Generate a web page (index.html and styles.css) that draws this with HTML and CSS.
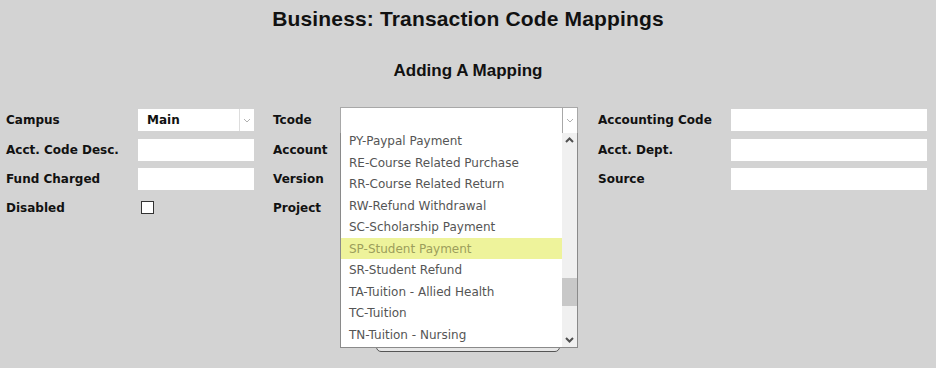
FILE: index.html
```html
<!DOCTYPE html>
<html>
<head>
<meta charset="utf-8">
<link rel="stylesheet" href="styles.css">
</head>
<body>
<div class="page">
  <h1 class="title">Business: Transaction Code Mappings</h1>
  <h2 class="subtitle">Adding A Mapping</h2>
  <div class="form">
    <div class="label">Campus</div>
    <div class="cell"><div class="select campus"><span class="val">Main</span><span class="arrow"><svg width="8" height="5" viewBox="0 0 8 5"><path d="M1 1 L4 4 L7 1" fill="none" stroke="#b0b0b0" stroke-width="1"/></svg></span></div></div>
    <div class="label">Tcode</div>
    <div class="cell">
      <div class="select tcode"><span class="val"></span><span class="arrow"><svg width="8" height="5" viewBox="0 0 8 5"><path d="M1 1 L4 4 L7 1" fill="none" stroke="#b0b0b0" stroke-width="1"/></svg></span></div>
      <div class="dropdown">
        <div class="items">
          <div class="item">PY-Paypal Payment</div>
          <div class="item">RE-Course Related Purchase</div>
          <div class="item">RR-Course Related Return</div>
          <div class="item">RW-Refund Withdrawal</div>
          <div class="item">SC-Scholarship Payment</div>
          <div class="item hl">SP-Student Payment</div>
          <div class="item">SR-Student Refund</div>
          <div class="item">TA-Tuition - Allied Health</div>
          <div class="item">TC-Tuition</div>
          <div class="item">TN-Tuition - Nursing</div>
        </div>
        <div class="scrollbar">
          <svg class="sb-up" width="15" height="15" viewBox="0 0 15 15"><path d="M4 9 L7.5 5.5 L11 9" fill="none" stroke="#505050" stroke-width="2"/></svg>
          <div class="sb-track"><div class="sb-thumb"></div></div>
          <svg class="sb-down" width="15" height="15" viewBox="0 0 15 15"><path d="M4 6 L7.5 9.5 L11 6" fill="none" stroke="#505050" stroke-width="2"/></svg>
        </div>
      </div>
    </div>
    <div class="label">Accounting Code</div>
    <div class="cell"><div class="input wide"></div></div>

    <div class="label">Acct. Code Desc.</div>
    <div class="cell"><div class="input"></div></div>
    <div class="label">Account</div>
    <div class="cell"></div>
    <div class="label">Acct. Dept.</div>
    <div class="cell"><div class="input wide"></div></div>

    <div class="label">Fund Charged</div>
    <div class="cell"><div class="input"></div></div>
    <div class="label">Version</div>
    <div class="cell"></div>
    <div class="label">Source</div>
    <div class="cell"><div class="input wide"></div></div>

    <div class="label">Disabled</div>
    <div class="cell"><div class="checkbox"></div></div>
    <div class="label">Project</div>
    <div class="cell"></div>
    <div class="label"></div>
    <div class="cell"></div>
  </div>
  <div class="actions"><div class="button"></div></div>
</div>
</body>
</html>
```
FILE: styles.css
```css
html, body {
  margin: 0;
  padding: 0;
  background: #d3d3d3;
}
body {
  font-family: "DejaVu Sans", sans-serif;
  color: #111;
  width: 936px;
  height: 368px;
  overflow: hidden;
}
.page {
  display: flex;
  flex-direction: column;
}
.title {
  margin: 7px 0 0 0;
  font-family: "Liberation Sans", sans-serif;
  font-size: 21px;
  line-height: 24px;
  font-weight: bold;
  text-align: center;
  letter-spacing: 0.15px;
}
.subtitle {
  margin: 30px 0 0 0;
  font-family: "Liberation Sans", sans-serif;
  font-size: 17px;
  line-height: 20px;
  font-weight: bold;
  text-align: center;
}
.form {
  margin-top: 24px;
  padding-left: 6px;
  display: grid;
  grid-template-columns: 132px 135px 67px 258px 133px 196px;
  grid-template-rows: 30px 29px 29px 29px;
  align-items: center;
}
.label {
  font-size: 12px;
  font-weight: bold;
  color: #111;
  white-space: nowrap;
}
.cell {
  position: relative;
  height: 100%;
  display: flex;
  align-items: center;
}
.input {
  width: 116px;
  height: 22px;
  background: #fff;
}
.input.wide {
  width: 196px;
}
.select {
  display: flex;
  align-items: stretch;
  background: #fff;
  box-sizing: border-box;
}
.select .val {
  flex: 1;
  display: flex;
  align-items: center;
  padding-left: 9px;
  font-size: 12px;
  font-weight: bold;
}
.select .arrow {
  width: 14px;
  display: flex;
  align-items: center;
  justify-content: center;
  border-left: 1px solid #ddd;
}
.campus {
  width: 116px;
  height: 22px;
}
.tcode {
  width: 238px;
  height: 27px;
  border: 1px solid #a8a8a8;
}
.tcode .arrow {
  border-left: 1px solid #a8a8a8;
}
.dropdown {
  position: absolute;
  left: 0;
  top: 28px;
  z-index: 5;
  width: 238px;
  height: 215px;
  box-sizing: border-box;
  border: 1px solid #8a8a8a;
  border-top: none;
  background: #fff;
  display: flex;
  overflow: hidden;
}
.items {
  flex: 1;
  margin-top: -3px;
}
.item {
  height: 21.5px;
  box-sizing: border-box;
  padding-top: 2px;
  line-height: 19.5px;
  padding-left: 8px;
  font-size: 12px;
  color: #555;
  white-space: nowrap;
}
.item.hl {
  background: #eef39b;
  color: #9c9e5c;
}
.scrollbar {
  width: 15px;
  background: #f0f0f0;
  display: flex;
  flex-direction: column;
}
.sb-track {
  flex: 1;
  position: relative;
}
.sb-thumb {
  position: absolute;
  left: 0;
  right: 0;
  top: 130px;
  height: 28px;
  background: #c8c8c8;
}
.checkbox {
  width: 11px;
  height: 11px;
  margin-left: 3px;
  border: 1px solid #333;
  background: #fff;
}
.actions {
  display: flex;
  justify-content: center;
  margin-top: 104px;
}
.button {
  width: 184px;
  height: 26px;
  box-sizing: border-box;
  border: 1px solid #555;
  border-radius: 5px;
  background: #e6e6e6;
}
```
